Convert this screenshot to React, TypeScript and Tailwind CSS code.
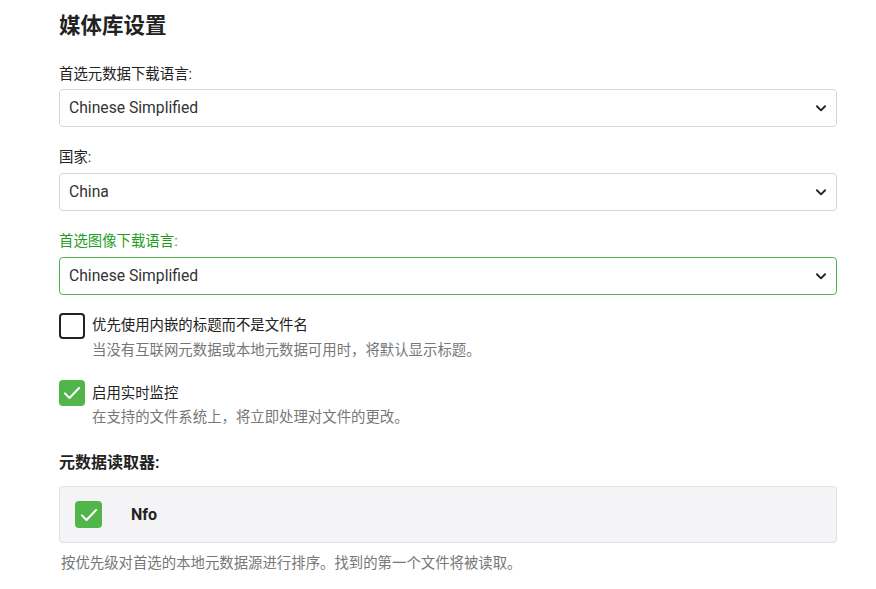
import React from "react";

const font = { fontFamily: 'Roboto, "Noto Sans CJK SC", sans-serif' };

function Chevron() {
  return (
    <svg width="14" height="14" viewBox="0 0 24 24" fill="none" stroke="#222" strokeWidth="3.2" strokeLinecap="round" strokeLinejoin="round">
      <path d="M5 9l7 7 7-7" />
    </svg>
  );
}

function Check() {
  return (
    <svg width="20" height="20" viewBox="0 0 24 24" fill="none" stroke="#fff" strokeWidth="2.4" strokeLinecap="round" strokeLinejoin="round">
      <path d="M3.5 12.5l5.5 5.5L20.5 6" />
    </svg>
  );
}

function Select({ label, value, focused, first }: { label: string; value: string; focused?: boolean; first?: boolean }) {
  return (
    <div className="flex flex-col">
      <div
        className={`text-[14.4px] ${first ? "leading-[20px] mb-[4px]" : "leading-[18px] mb-[6px]"} ${
          focused ? "text-[#1e9e1e]" : "text-[#222]"
        }`}
      >
        {label}
      </div>
      <div
        className={`h-[38px] rounded-[4px] border flex items-center justify-between pl-[9px] pr-[8px] bg-white ${
          focused ? "border-[#52b54b]" : "border-[#d6d6d6]"
        }`}
      >
        <span className="text-[15.7px] text-[#333]">{value}</span>
        <Chevron />
      </div>
    </div>
  );
}

export default function App() {
  return (
    <div className="w-[876px] h-[589px] bg-white overflow-hidden" style={font}>
      <div className="ml-[59px] w-[778px] flex flex-col">
        <h1 className="text-[21.5px] font-bold text-[#222] leading-[30px] mt-[11px]">媒体库设置</h1>
        <div className="mt-[24px] flex flex-col gap-[22px]">
          <Select label="首选元数据下载语言:" value="Chinese Simplified" first />
          <Select label="国家:" value="China" />
          <Select label="首选图像下载语言:" value="Chinese Simplified" focused />
        </div>

        <div className="mt-[18px] flex gap-[7px]">
          <div className="w-[26px] h-[26px] rounded-[4px] border-[2px] border-[#222] shrink-0" />
          <div className="flex flex-col">
            <div className="text-[14.4px] text-[#222] leading-[18px] mt-[4px]">优先使用内嵌的标题而不是文件名</div>
            <div className="text-[14.4px] text-[#777] leading-[18px] mt-[7px]">当没有互联网元数据或本地元数据可用时，将默认显示标题。</div>
          </div>
        </div>

        <div className="mt-[20px] flex gap-[7px]">
          <div className="w-[26px] h-[26px] rounded-[4px] bg-[#52b54b] flex items-center justify-center shrink-0">
            <Check />
          </div>
          <div className="flex flex-col">
            <div className="text-[14.4px] text-[#222] leading-[18px] mt-[5px]">启用实时监控</div>
            <div className="text-[14.4px] text-[#777] leading-[18px] mt-[6px]">在支持的文件系统上，将立即处理对文件的更改。</div>
          </div>
        </div>

        <h2 className="mt-[25px] text-[16px] font-bold text-[#222] leading-[22px]">元数据读取器:</h2>

        <div className="mt-[12px] h-[57px] rounded-[4px] border border-[#e2e2e4] bg-[#f4f4f6] flex items-center pl-[15px]">
          <div className="w-[27px] h-[27px] rounded-[4px] bg-[#52b54b] flex items-center justify-center shrink-0">
            <Check />
          </div>
          <span className="ml-[29px] text-[16px] font-bold text-[#222] mt-[1px]">Nfo</span>
        </div>

        <div className="mt-[12px] ml-[2px] text-[14.4px] text-[#777] leading-[18px]">
          按优先级对首选的本地元数据源进行排序。找到的第一个文件将被读取。
        </div>
      </div>
    </div>
  );
}
